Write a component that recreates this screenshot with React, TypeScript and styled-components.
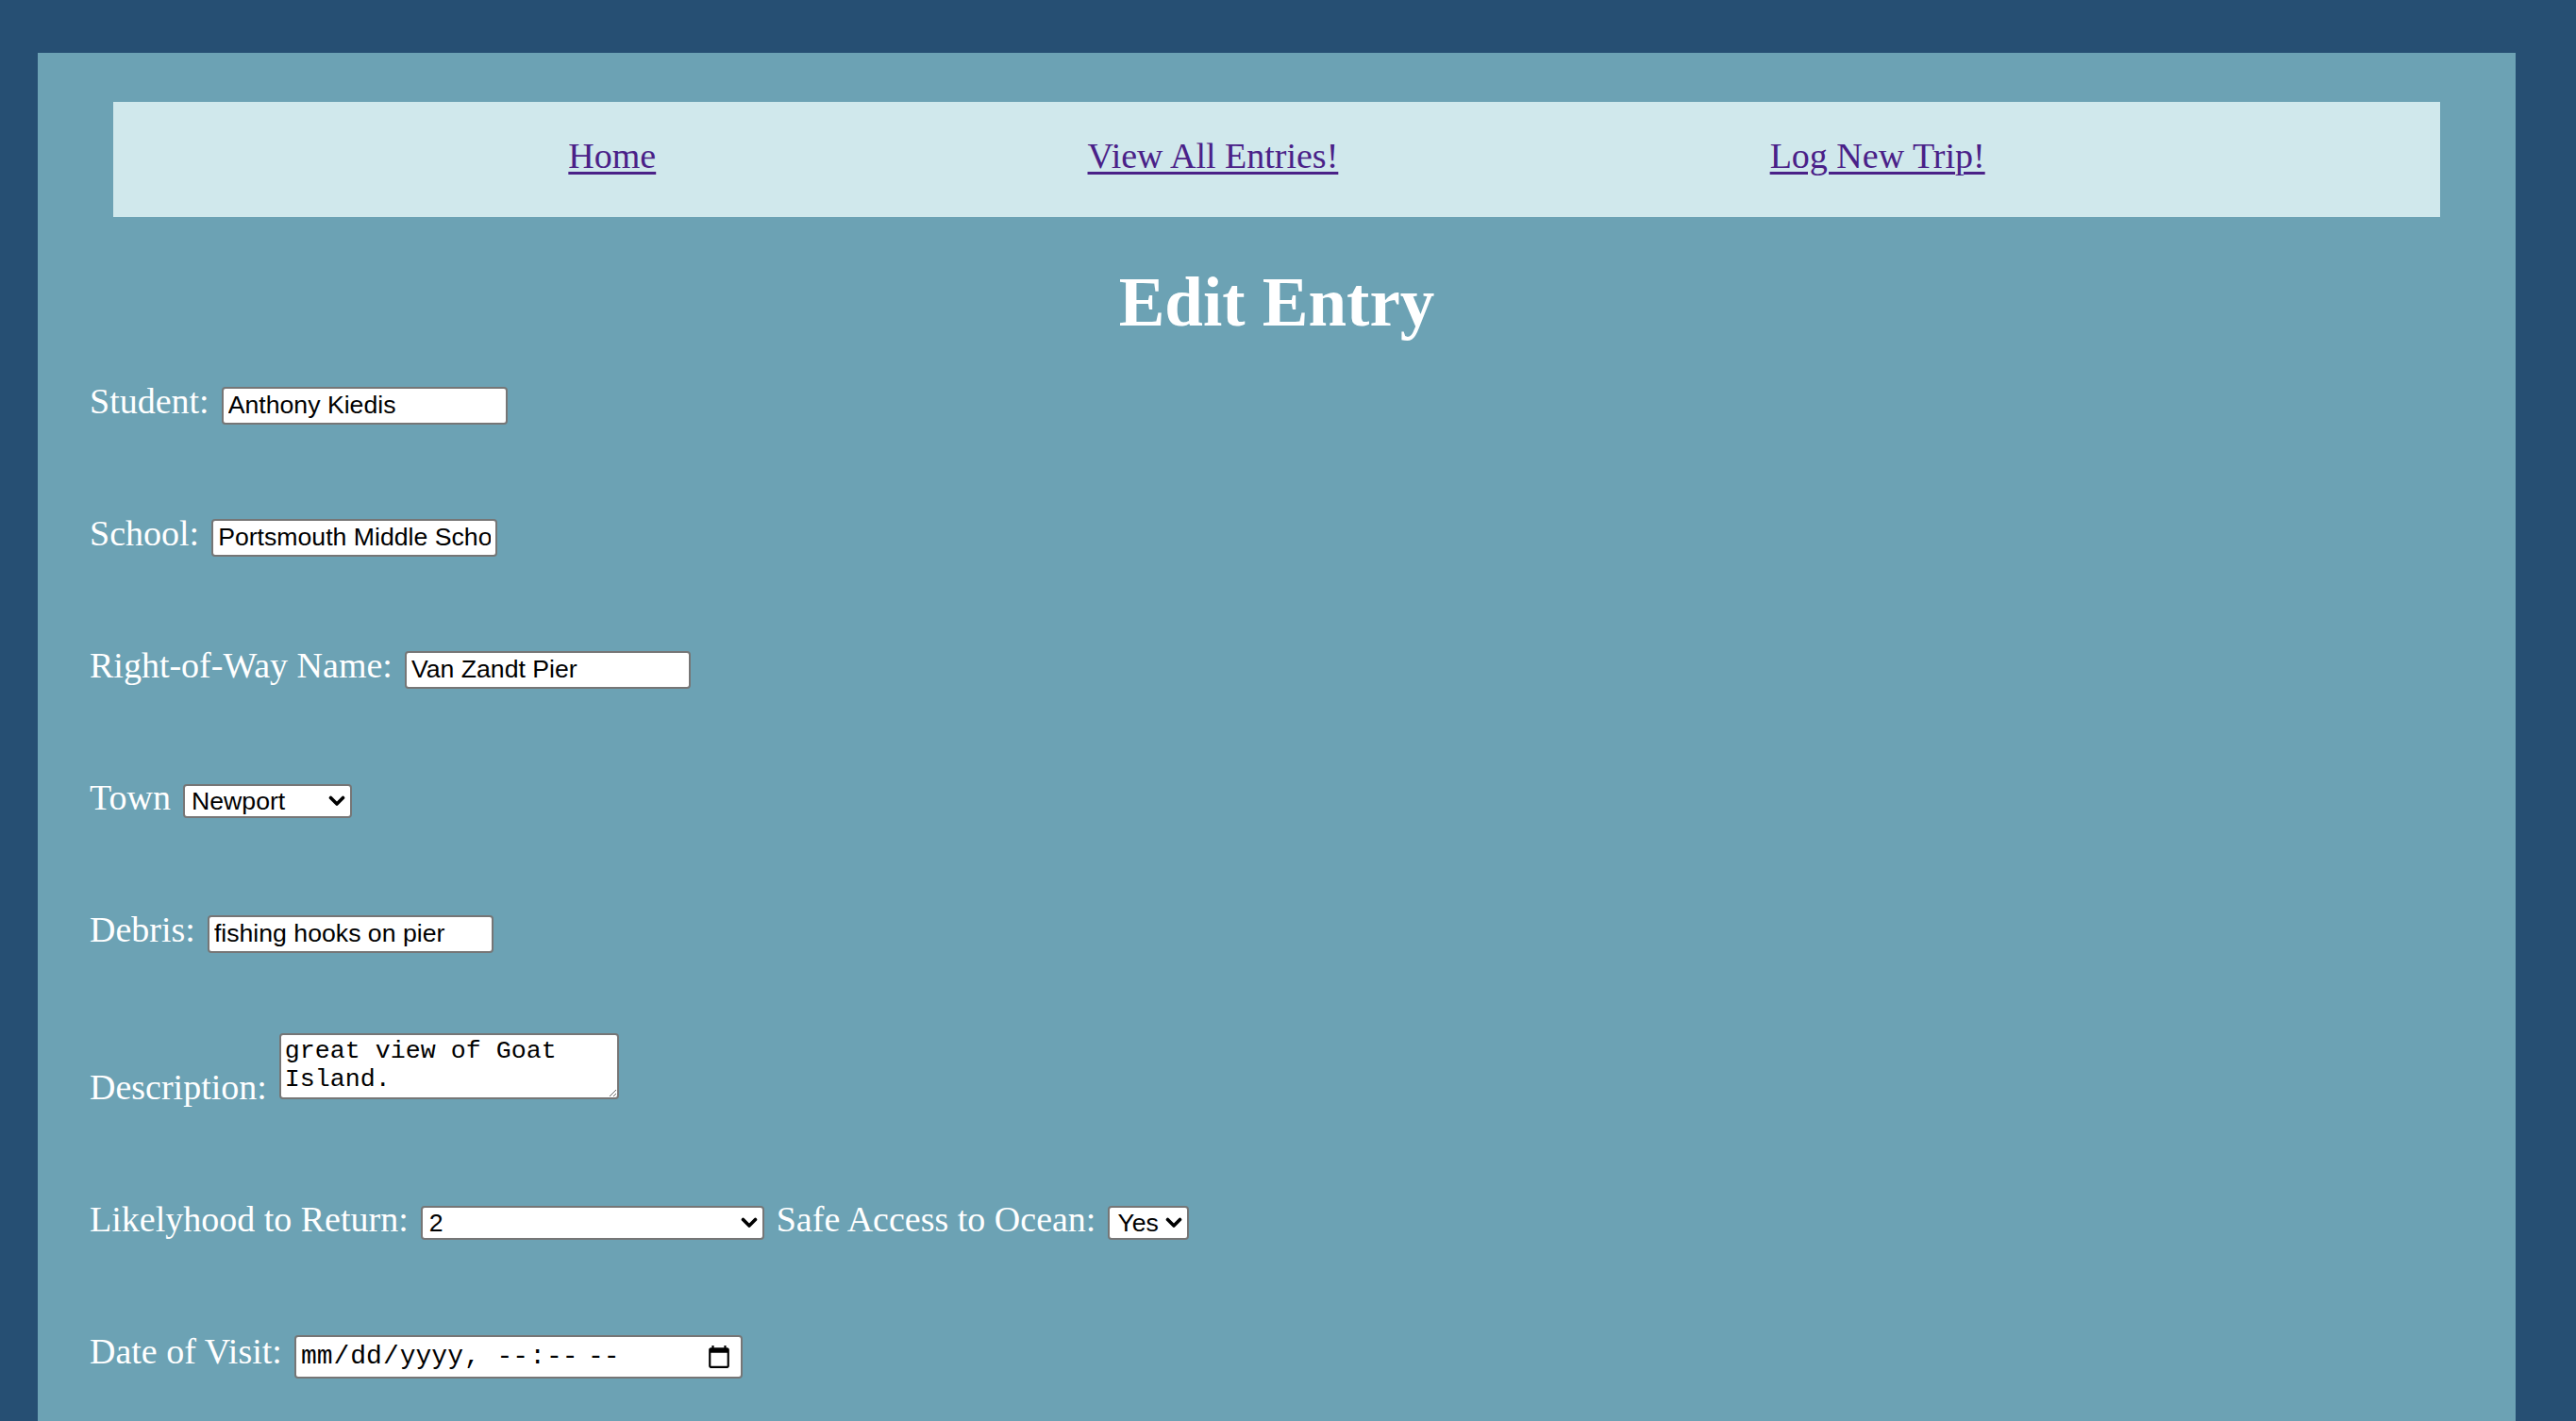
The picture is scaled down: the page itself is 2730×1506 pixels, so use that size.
import React from 'react'
import styled, { createGlobalStyle } from 'styled-components'

const GlobalStyle = createGlobalStyle`
    html,
    body {
        margin: 0;
        padding: 0;
        background-color: #264f73;
    }
    body {
        font-family: 'Liberation Serif', 'DejaVu Serif', serif;
    }
`

// chevron for the selects (vector, not raster)
const chevron = encodeURIComponent(
    '<svg xmlns="http://www.w3.org/2000/svg" width="18" height="12" viewBox="0 0 18 12"><path d="M2.5 2.5 L9 9 L15.5 2.5" fill="none" stroke="#000" stroke-width="3.6" stroke-linecap="round" stroke-linejoin="round"/></svg>'
)

const Panel = styled.div`
    margin: 56px 64px 0 40px;
    padding: 52px 0 120px;
    background-color: #6ca2b4;
    min-height: 1400px;
`

const NavBar = styled.nav`
    margin: 0 80px;
    height: 122px;
    box-sizing: border-box;
    padding: 0 25px 8px;
    display: flex;
    align-items: center;
    justify-content: space-evenly;
    background-color: #d0e8ec;
`

const NavLink = styled.a`
    font-size: 38px;
    line-height: normal;
    color: #4a2188;
    text-decoration: underline;
    text-decoration-thickness: 3px;
    text-underline-offset: 4px;
    cursor: pointer;
`

const Title = styled.h1`
    margin: 54px 0 0;
    font-size: 73px;
    line-height: 73px;
    font-weight: 700;
    text-align: center;
    color: #fff;
`

const Form = styled.form`
    margin-top: 38px;
    padding: 0 55px;
`

const Row = styled.div`
    font-size: 38px;
    line-height: 60px;
    color: #fff;
    white-space: nowrap;
    margin-bottom: 80px;
`

const Label = styled.label<{ $before?: boolean }>`
    margin-right: 13px;
    margin-left: ${p => (p.$before ? '13px' : '0')};
`

const controlBase = `
    box-sizing: border-box;
    margin: 0;
    border: 2px solid #767676;
    border-radius: 4px;
    background-color: #fff;
    color: #000;
    line-height: normal;
    vertical-align: baseline;
`

const TextInput = styled.input<{ $w?: number }>`
    ${controlBase}
    width: ${p => p.$w || 303}px;
    height: 40px;
    padding: 0 5px;
    font-family: 'Liberation Sans', Arial, sans-serif;
    font-size: 26.67px;
`

const Select = styled.select<{ $w: number; $pl?: number; $pr?: number }>`
    ${controlBase}
    appearance: none;
    -webkit-appearance: none;
    width: ${p => p.$w}px;
    height: 36px;
    padding: 0 ${p => p.$pr || 28}px 0 ${p => p.$pl || 7}px;
    font-family: 'Liberation Sans', Arial, sans-serif;
    font-size: 26.67px;
    background-image: url("data:image/svg+xml,${chevron}");
    background-repeat: no-repeat;
    background-position: right 5px center;
    background-size: 18px 12px;
`

const TextArea = styled.textarea`
    ${controlBase}
    width: 360px;
    height: 70px;
    padding: 2px 4px;
    font-family: 'Liberation Mono', 'DejaVu Sans Mono', monospace;
    font-size: 26.67px;
`

const DateInput = styled.input`
    ${controlBase}
    width: 475px;
    height: 46px;
    padding: 0 10px 0 4px;
    font-family: 'Liberation Mono', 'DejaVu Sans Mono', monospace;
    font-size: 28px;
    &::-webkit-calendar-picker-indicator {
        width: 26px;
        height: 28px;
        padding: 0;
        margin: 0;
        background-size: 26px 28px;
    }
`

const towns = ['Newport', 'Middletown', 'Portsmouth', 'Jamestown', 'Narragansett']

export default function App() {
    return (
        <>
            <GlobalStyle />
            <Panel>
                <NavBar>
                    <NavLink href="#">Home</NavLink>
                    <NavLink href="#">View All Entries!</NavLink>
                    <NavLink href="#">Log New Trip!</NavLink>
                </NavBar>
                <Title>Edit Entry</Title>
                <Form onSubmit={e => e.preventDefault()}>
                    <Row>
                        <Label>Student:</Label>
                        <TextInput type="text" defaultValue="Anthony Kiedis" />
                    </Row>
                    <Row>
                        <Label>School:</Label>
                        <TextInput type="text" defaultValue="Portsmouth Middle School" />
                    </Row>
                    <Row>
                        <Label>Right-of-Way Name:</Label>
                        <TextInput type="text" defaultValue="Van Zandt Pier" />
                    </Row>
                    <Row>
                        <Label>Town</Label>
                        <Select $w={179} defaultValue="Newport">
                            {towns.map(t => (
                                <option key={t}>{t}</option>
                            ))}
                        </Select>
                    </Row>
                    <Row>
                        <Label>Debris:</Label>
                        <TextInput type="text" defaultValue="fishing hooks on pier" />
                    </Row>
                    <Row>
                        <Label>Description:</Label>
                        <TextArea defaultValue="great view of Goat Island." />
                    </Row>
                    <Row>
                        <Label>Likelyhood to Return:</Label>
                        <Select $w={364} defaultValue="2">
                            {[1, 2, 3, 4, 5].map(n => (
                                <option key={n}>{n}</option>
                            ))}
                        </Select>
                        <Label $before>Safe Access to Ocean:</Label>
                        <Select $w={86} $pl={8} $pr={22} defaultValue="Yes">
                            <option>Yes</option>
                            <option>No</option>
                        </Select>
                    </Row>
                    <Row>
                        <Label>Date of Visit:</Label>
                        <DateInput type="datetime-local" />
                    </Row>
                </Form>
            </Panel>
        </>
    )
}
